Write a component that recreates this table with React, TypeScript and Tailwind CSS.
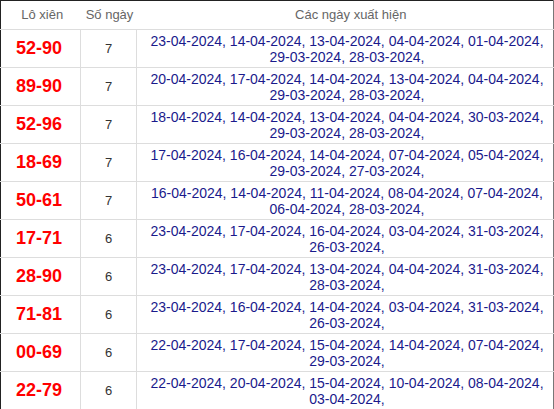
const ROWS: { pair: string; count: number; dates: string[] }[] = [
  { pair: '52-90', count: 7, dates: ['23-04-2024', '14-04-2024', '13-04-2024', '04-04-2024', '01-04-2024', '29-03-2024', '28-03-2024'] },
  { pair: '89-90', count: 7, dates: ['20-04-2024', '17-04-2024', '14-04-2024', '13-04-2024', '04-04-2024', '29-03-2024', '28-03-2024'] },
  { pair: '52-96', count: 7, dates: ['18-04-2024', '14-04-2024', '13-04-2024', '04-04-2024', '30-03-2024', '29-03-2024', '28-03-2024'] },
  { pair: '18-69', count: 7, dates: ['17-04-2024', '16-04-2024', '14-04-2024', '07-04-2024', '05-04-2024', '29-03-2024', '27-03-2024'] },
  { pair: '50-61', count: 7, dates: ['16-04-2024', '14-04-2024', '11-04-2024', '08-04-2024', '07-04-2024', '06-04-2024', '28-03-2024'] },
  { pair: '17-71', count: 6, dates: ['23-04-2024', '17-04-2024', '16-04-2024', '03-04-2024', '31-03-2024', '26-03-2024'] },
  { pair: '28-90', count: 6, dates: ['23-04-2024', '17-04-2024', '13-04-2024', '04-04-2024', '31-03-2024', '28-03-2024'] },
  { pair: '71-81', count: 6, dates: ['23-04-2024', '16-04-2024', '14-04-2024', '03-04-2024', '31-03-2024', '26-03-2024'] },
  { pair: '00-69', count: 6, dates: ['22-04-2024', '17-04-2024', '15-04-2024', '14-04-2024', '07-04-2024', '29-03-2024'] },
  { pair: '22-79', count: 6, dates: ['22-04-2024', '20-04-2024', '15-04-2024', '10-04-2024', '08-04-2024', '03-04-2024'] },
]

export default function App() {
  return (
    <div className="w-[554px] h-[409px] bg-white font-['Liberation_Sans',Arial,sans-serif] overflow-hidden">
      <table className="w-[554px] table-fixed border-collapse border-t border-l border-t-[#222] border-l-[#222] border-r border-b border-r-[#777] border-b-[#777]">
        <colgroup>
          <col className="w-[80px]" />
          <col className="w-[56px]" />
          <col />
        </colgroup>
        <thead>
          <tr className="h-[29px] border-b border-[#ddd]">
            <th className="text-[13px] font-normal text-[#666] text-center pl-[3px] pr-0 py-0">Lô xiên</th>
            <th className="text-[13px] font-normal text-[#666] text-center pl-[2px] pr-0 py-0">Số ngày</th>
            <th className="text-[13px] font-normal text-[#666] text-center pl-[12px] pr-0 py-0">Các ngày xuất hiện</th>
          </tr>
        </thead>
        <tbody>
          {ROWS.map((row) => (
            <tr key={row.pair} className="h-[38px] border-b border-[#ddd]">
              {/* pair */}
              <td className="border-r border-[#ddd] text-center align-middle pl-0 pr-[3px] py-0 text-[18px] font-bold text-[#ff0000]">
                {row.pair}
              </td>
              <td className="border-r border-[#ddd] text-center align-middle p-0 text-[13px] text-[#333]">
                {row.count}
              </td>
              <td className="text-center align-middle pl-[4px] pr-0 py-0 text-[14px] leading-[16px] text-[#1a1a8c]">
                <div>{row.dates.slice(0, 5).join(', ') + ','}</div>
                <div>{row.dates.slice(5).join(', ') + ','}</div>
              </td>
            </tr>
          ))}
        </tbody>
      </table>
    </div>
  )
}
